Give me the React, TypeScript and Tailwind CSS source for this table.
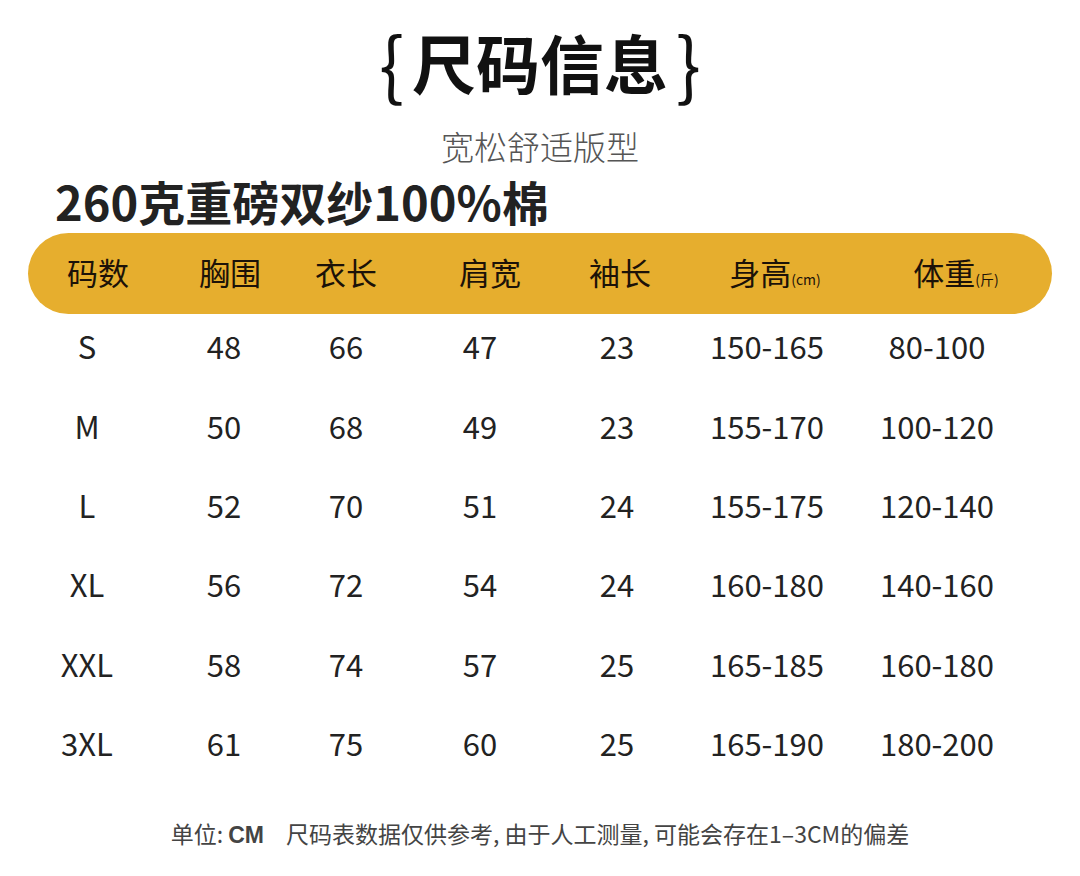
const headers = [
  { label: "码数" },
  { label: "胸围" },
  { label: "衣长" },
  { label: "肩宽" },
  { label: "袖长" },
  { label: "身高", unit: "(cm)" },
  { label: "体重", unit: "(斤)" },
];

const rows = [
  ["S", "48", "66", "47", "23", "150-165", "80-100"],
  ["M", "50", "68", "49", "23", "155-170", "100-120"],
  ["L", "52", "70", "51", "24", "155-175", "120-140"],
  ["XL", "56", "72", "54", "24", "160-180", "140-160"],
  ["XXL", "58", "74", "57", "25", "165-185", "160-180"],
  ["3XL", "61", "75", "60", "25", "165-190", "180-200"],
];

export default function App() {
  return (
    <div className="w-[1080px] h-[876px] bg-white text-[#1f1f1f] font-['Noto_Sans_CJK_SC','Noto_Sans',sans-serif] overflow-hidden">
      <div className="flex justify-center items-center pt-[17px] h-[105px]">
        <span className="text-[74px] font-normal leading-none text-[#111]">{"{"}</span>
        <span className="text-[64px] font-bold leading-none mx-[8px] text-[#111]">尺码信息</span>
        <span className="text-[74px] font-normal leading-none text-[#111]">{"}"}</span>
      </div>
      <div className="text-center text-[33px] font-light text-[#555] leading-none mt-[25px]">
        宽松舒适版型
      </div>
      <div className="pl-[55px] mt-[14px] text-[47px] font-bold leading-none text-[#222]">
        260克重磅双纱100%棉
      </div>
      <div className="mx-[28px] mt-[9px] h-[81px] pb-[5px] rounded-full bg-[#e6ae2e] grid grid-cols-[140px_124px_108px_180px_80px_230px_132px] items-center">
        {headers.map((h) => (
          <div key={h.label} className="text-center text-[31px] leading-none text-[#1c1208]">
            {h.label}
            {h.unit && <span className="text-[14px]">{h.unit}</span>}
          </div>
        ))}
      </div>
      <div className="mx-[28px] mt-[-8px]">
        {rows.map((r) => (
          <div
            key={r[0]}
            className="grid grid-cols-[118px_156px_88px_180px_94px_206px_134px] h-[79.4px] items-center"
          >
            {r.map((c, i) => (
              <div key={i} className="text-center text-[31px] leading-none text-[#222]">
                {c}
              </div>
            ))}
          </div>
        ))}
      </div>
      <div className="text-center mt-[40px] text-[23px] text-[#444] leading-none">
        单位: <span className="font-['Liberation_Sans'] font-bold">CM</span>
        <span className="ml-[22px]">尺码表数据仅供参考, 由于人工测量, 可能会存在1–3CM的偏差</span>
      </div>
    </div>
  );
}
